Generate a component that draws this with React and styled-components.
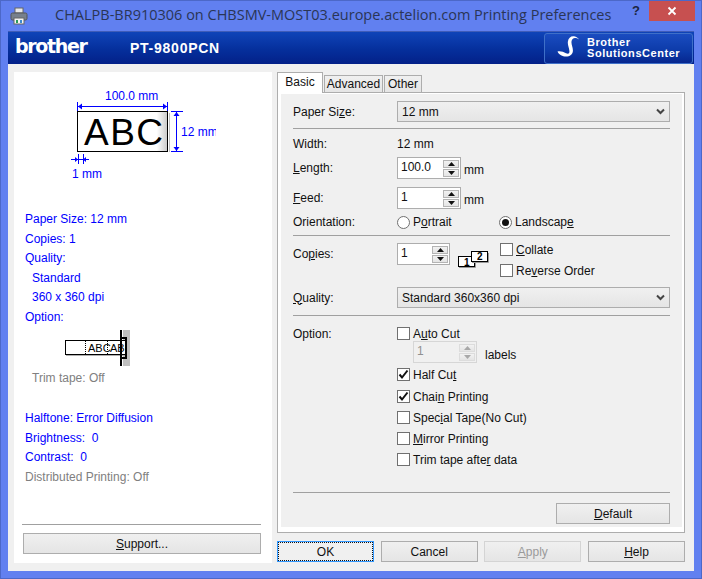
import React from "react";
import styled, { createGlobalStyle } from "styled-components";

const GlobalStyle = createGlobalStyle`
  html, body {
    margin: 0;
    padding: 0;
    background: #6180f0;
  }
  * {
    box-sizing: border-box;
  }
`;

const Win = styled.div`
  width: 702px;
  height: 579px;
  overflow: hidden;
  display: flex;
  flex-direction: column;
  background: #6180f0;
  border: 1px solid #4c68c8;
  font-family: "Liberation Sans", Arial, sans-serif;
  font-size: 12px;
  color: #111;
`;

const TitleBar = styled.div`
  height: 30px;
  flex: none;
  display: flex;
  align-items: flex-start;
  position: relative;
`;

const AppIcon = styled.svg`
  width: 18px;
  height: 18px;
  margin: 6px 0 0 9px;
  flex: none;
`;

const TitleText = styled.div`
  margin: 3px 0 0 27px;
  font-family: "Open Sans", sans-serif;
  font-size: 14.5px;
  line-height: 22px;
  color: #2a3556;
  white-space: nowrap;
`;

const HelpMark = styled.div`
  position: absolute;
  left: 631px;
  top: 2px;
  font-weight: bold;
  font-size: 13px;
  color: #1c2540;
`;

const CloseBtn = styled.div`
  position: absolute;
  left: 648px;
  top: 0;
  width: 46px;
  height: 20px;
  background: #c75050;
  color: #fff;
  display: flex;
  align-items: center;
  justify-content: center;
`;

const Client = styled.div`
  flex: 1;
  margin: 0 7px 7px 7px;
  display: flex;
  flex-direction: column;
  min-height: 0;
  border-top: 1px solid #3f5cb8;
`;

const Header = styled.div`
  height: 32px;
  flex: none;
  display: flex;
  align-items: center;
  padding: 0 1px 0 7px;
  background: linear-gradient(#0f44b8, #052f9c 55%, #032088);
  color: #fff;
`;

const Logo = styled.div`
  width: 115px;
  font-family: "DejaVu Sans", sans-serif;
  font-weight: bold;
  font-size: 19px;
  letter-spacing: -1.35px;
  line-height: 26px;
  margin-top: -4px;
`;

const ModelName = styled.div`
  font-weight: bold;
  font-size: 14px;
  letter-spacing: 0.75px;
`;

const SolutionsBtn = styled.div`
  margin-left: auto;
  width: 149px;
  height: 31px;
  display: flex;
  align-items: center;
  gap: 6px;
  padding-left: 12px;
  border: 1px solid #3f70c8;
  border-radius: 3px;
  background: linear-gradient(#1a4cc0, #0c3aa8 60%, #06268e);
  font-weight: bold;
  font-size: 11px;
  line-height: 11px;
  letter-spacing: 0.55px;
`;

const Body = styled.div`
  flex: 1;
  display: flex;
  gap: 5px;
  padding: 8px 9px 8px 6px;
  background: #f0f0f0;
  min-height: 0;
`;

const LeftPanel = styled.div`
  width: 258px;
  flex: none;
  display: flex;
  flex-direction: column;
  background: #fff;
  padding: 16px 11px 9px 8px;
`;

const Summary = styled.div`
  margin: 26px 0 0 3px;
`;

const SummaryLine = styled.div`
  height: 19.6px;
  line-height: 19.6px;
  color: ${(p) => (p.$muted ? "#808080" : "#0000ff")};
  padding-left: ${(p) => (p.$indent ? "7px" : "0")};
  white-space: nowrap;
`;

const PreviewSvg = styled.svg`
  display: block;
  margin-left: 48px;
  flex: none;
`;

const TrimSvg = styled.svg`
  display: block;
  margin: 2px 0 3px 35px;
`;

const LeftDivider = styled.div`
  margin-top: auto;
  height: 1px;
  background: #a0a0a0;
  flex: none;
`;

const SupportBtn = styled.div`
  margin-top: 8px;
  width: 238px;
  margin-left: 1px;
`;

const RightCol = styled.div`
  width: 408px;
  flex: none;
  display: flex;
  flex-direction: column;
  padding-bottom: 1px;
`;

const Tabs = styled.div`
  display: flex;
  align-items: flex-end;
  height: 21px;
  flex: none;
  position: relative;
  z-index: 1;
  margin-bottom: -1px;
`;

const Tab = styled.div`
  height: ${(p) => (p.$active ? "21px" : "18px")};
  width: ${(p) => p.$w}px;
  margin-left: ${(p) => (p.$active ? "0" : "1px")};
  border: 1px solid #adadad;
  border-bottom: ${(p) => (p.$active ? "none" : "1px solid #adadad")};
  background: ${(p) => (p.$active ? "#fff" : "linear-gradient(#f0f0f0, #e5e5e5)")};
  text-align: center;
  line-height: ${(p) => (p.$active ? "18px" : "16px")};
`;

const TabPanel = styled.div`
  flex: 1;
  border: 1px solid #adadad;
  background: #fff;
  padding: 1px 2px 5px 3px;
  display: flex;
  min-height: 0;
`;

const Form = styled.div`
  flex: 1;
  background: #f0f0f0;
  padding: 7px 12px 3px 12px;
  display: flex;
  flex-direction: column;
`;

const Row = styled.div`
  display: flex;
  align-items: ${(p) => p.$align || "center"};
  height: ${(p) => p.$h}px;
  margin-top: ${(p) => p.$mt || 0}px;
  flex: none;
`;

const Label = styled.div`
  width: 104px;
  flex: none;
  white-space: nowrap;
`;

const Divider = styled.div`
  height: 1px;
  background: #a0a0a0;
  margin-top: ${(p) => p.$mt}px;
  flex: none;
`;

const Select = styled.div`
  flex: 1;
  height: 21px;
  display: flex;
  align-items: center;
  justify-content: space-between;
  padding: 0 4px 0 4px;
  border: 1px solid #adadad;
  background: linear-gradient(#f0f0f0, #e5e5e5);
`;

const Spin = styled.div`
  width: ${(p) => p.$w}px;
  height: 22px;
  display: flex;
  justify-content: space-between;
  padding: 2px 1px 1px 3px;
  border: 1px solid ${(p) => (p.$disabled ? "#d6d6d6" : "#adadad")};
  background: ${(p) => (p.$disabled ? "#f0f0f0" : "#fff")};
  color: ${(p) => (p.$disabled ? "#909090" : "#111")};
  line-height: 14px;
  flex: none;
`;

const SpinBtns = styled.div`
  width: 16px;
  display: flex;
  flex-direction: column;
  gap: 1px;
`;

const SpinBtn = styled.div`
  flex: 1;
  display: flex;
  align-items: center;
  justify-content: center;
  border: 1px solid ${(p) => (p.$disabled ? "#dcdcdc" : "#b4b4b4")};
  background: linear-gradient(#f2f2f2, #e4e4e4);
  color: ${(p) => (p.$disabled ? "#a8a8a8" : "#111")};
`;

const Unit = styled.span`
  margin-left: 3px;
  padding-top: 3px;
`;

const Choice = styled.div`
  display: flex;
  align-items: center;
  gap: 3px;
  white-space: nowrap;
  width: ${(p) => (p.$w ? `${p.$w}px` : "auto")};
  height: 13px;
  margin-top: ${(p) => p.$mt || 0}px;
  flex: none;
`;

const Box = styled.div`
  width: 13px;
  height: 13px;
  flex: none;
  border: 1px solid #707070;
  background: #fff;
  display: flex;
  align-items: center;
  justify-content: center;
`;

const RadioDot = styled.div`
  width: 13px;
  height: 13px;
  flex: none;
  border: 1px solid #707070;
  border-radius: 50%;
  background: #fff;
  display: flex;
  align-items: center;
  justify-content: center;

  &::after {
    content: "";
    width: 7px;
    height: 7px;
    border-radius: 50%;
    background: ${(p) => (p.$on ? "#111" : "transparent")};
  }
`;

const ChoiceCol = styled.div`
  display: flex;
  flex-direction: column;
`;

const Footer = styled.div`
  margin-top: auto;
  flex: none;
`;

const FooterRow = styled.div`
  display: flex;
  justify-content: flex-end;
  margin-top: 10px;
`;

const Btn = styled.div`
  width: ${(p) => p.$w}px;
  height: 21px;
  display: flex;
  align-items: center;
  justify-content: center;
  border: 1px solid ${(p) => (p.$disabled ? "#d4d4d4" : p.$focus ? "#3399ff" : "#adadad")};
  background: ${(p) => (p.$focus ? "#f0f0f0" : "linear-gradient(#f0f0f0, #e5e5e5)")};
  color: ${(p) => (p.$disabled ? "#9a9a9a" : "#111")};
  flex: none;
`;

const FocusRing = styled.div`
  position: absolute;
`;

const OkInner = styled.div`
  width: 100%;
  height: 100%;
  display: flex;
  align-items: center;
  justify-content: center;
  border: 1px dotted #111;
`;

const Actions = styled.div`
  display: flex;
  justify-content: space-between;
  margin-top: 8px;
  flex: none;
`;

const Mn = styled.span`
  text-decoration: underline;
`;

const Up = () => (
  <svg width="7" height="4" viewBox="0 0 7 4"><path d="M3.5 0 7 4H0z" fill="currentColor" /></svg>
);
const Down = () => (
  <svg width="7" height="4" viewBox="0 0 7 4"><path d="M0 0h7L3.5 4z" fill="currentColor" /></svg>
);
const Chevron = () => (
  <svg width="9" height="7" viewBox="0 0 9 7">
    <path d="M1 1.5 4.5 5 8 1.5" fill="none" stroke="#444" strokeWidth="2" />
  </svg>
);
const Check = () => (
  <svg width="11" height="11" viewBox="0 0 11 11">
    <path d="M1.5 5.5 4 8.5 9.5 1.5" fill="none" stroke="#111" strokeWidth="2" />
  </svg>
);

function Spinner({ value, w, disabled }) {
  return (
    <Spin $w={w} $disabled={disabled}>
      <span>{value}</span>
      <SpinBtns>
        <SpinBtn $disabled={disabled}><Up /></SpinBtn>
        <SpinBtn $disabled={disabled}><Down /></SpinBtn>
      </SpinBtns>
    </Spin>
  );
}

function CheckItem({ checked, mt, children }) {
  return (
    <Choice $mt={mt}>
      <Box>{checked && <Check />}</Box>
      <span>{children}</span>
    </Choice>
  );
}

function PreviewDiagram() {
  const blue = "#0000ff";
  return (
    <PreviewSvg width="146" height="96" viewBox="0 0 146 96">
      <defs>
        <linearGradient id="shade" x1="0" x2="1">
          <stop offset="0.88" stopColor="#fff" />
          <stop offset="1" stopColor="#c8c8c8" />
        </linearGradient>
      </defs>
      <text x="35" y="12" fontSize="12" fill={blue} fontFamily="Liberation Sans">100.0 mm</text>
      <g stroke={blue} fill="none" shapeRendering="crispEdges">
        <path d="M7.5 14v10M97.5 14v10M8 18.5h89" />
        <path d="M101 23.5h12M101 63.5h12M106.5 24v39" />
        <path d="M1 71.5h18M8.5 66v10M13.5 66v10" />
      </g>
      <g fill={blue}>
        <path d="M8 18.5l4-3v6zM97 18.5l-4-3v6zM106.5 24l-3 4h6zM106.5 63l-3-4h6z" />
        <path d="M8 71.5l-3-2.5v5zM13 71.5l3-2.5v5z" />
      </g>
      <rect x="7.5" y="23.5" width="90" height="40" fill="url(#shade)" stroke="#000" />
      <rect x="99" y="25" width="1" height="39" fill="#c0c0c0" />
      <text x="14" y="57" fontSize="37" fill="#000" fontFamily="Liberation Sans" letterSpacing="1.5">ABC</text>
      <text x="111" y="48" fontSize="12" fill={blue} fontFamily="Liberation Sans">12 mm</text>
      <text x="2" y="90" fontSize="12" fill={blue} fontFamily="Liberation Sans">1 mm</text>
    </PreviewSvg>
  );
}

function TrimDiagram() {
  return (
    <TrimSvg width="72" height="36" viewBox="0 0 72 36">
      <rect x="63" y="0" width="7" height="36" fill="#c0c0c0" />
      <rect x="5.5" y="10.5" width="61" height="14" fill="#fff" stroke="#000" />
      <path d="M6 25.5h60" stroke="#b0b0b0" />
      <path d="M25.5 11v13M47.5 11v13" stroke="#000" strokeDasharray="1 1" />
      <svg x="0" y="0" width="66" height="36">
        <text x="28" y="22" fontSize="11" fontFamily="Liberation Sans" fill="#000">ABC</text>
        <text x="50" y="22" fontSize="11" fontFamily="Liberation Sans" fill="#000">ABC</text>
      </svg>
      <rect x="60" y="0" width="2" height="36" fill="#000" />
      <path d="M62 8h4v20h-4" fill="none" stroke="#000" strokeWidth="2" />
    </TrimSvg>
  );
}

function CopiesIcon() {
  return (
    <svg width="32" height="18" viewBox="0 0 32 18" style={{ marginLeft: 7, marginTop: 7, flex: "none" }}>
      <rect x="1.5" y="6.5" width="16" height="10" fill="#fff" stroke="#000" />
      <path d="M2 17.5h16.5V8" fill="none" stroke="#999" />
      <text x="7" y="15.5" fontSize="10" fontWeight="bold" fontFamily="Liberation Sans">1</text>
      <rect x="14.5" y="1.5" width="16" height="10" fill="#fff" stroke="#000" />
      <path d="M15 12.5h16.5V3" fill="none" stroke="#999" />
      <text x="20" y="10" fontSize="10" fontWeight="bold" fontFamily="Liberation Sans">2</text>
    </svg>
  );
}

export default function App() {
  return (
    <Win>
      <GlobalStyle />
      <TitleBar>
        <AppIcon viewBox="0 0 18 18">
          <rect x="5" y="1" width="8" height="5" fill="#e8e8e8" stroke="#666" />
          <rect x="1" y="6" width="16" height="7" rx="1.5" fill="#77808c" stroke="#555" />
          <rect x="4" y="11" width="10" height="6" fill="#f4f4f4" stroke="#666" />
          <rect x="6" y="13" width="2" height="3" fill="#2a9a5a" />
          <rect x="10" y="13" width="2" height="3" fill="#3a8ad0" />
        </AppIcon>
        <TitleText>CHALPB-BR910306 on CHBSMV-MOST03.europe.actelion.com Printing Preferences</TitleText>
        <HelpMark>?</HelpMark>
        <CloseBtn>
          <svg width="10" height="10" viewBox="0 0 10 10">
            <path d="M1.5 1.5l7 7M8.5 1.5l-7 7" stroke="#fff" strokeWidth="1.8" />
          </svg>
        </CloseBtn>
      </TitleBar>
      <Client>
        <Header>
          <Logo>brother</Logo>
          <ModelName>PT-9800PCN</ModelName>
          <SolutionsBtn>
            <svg width="24" height="24" viewBox="0 0 24 24" style={{ flex: "none" }}>
              <path
                d="M22 3.5C18 1 15 2 14.5 5.5c-.4 3 1.6 6 1.4 9.5-.2 3.500-3 5.500-7 5.500C5.500 20.500 2 19 .5 15.500c3-.5 6 .3 8.500 1.800 2.500 1.200 3.600 0 3.400-2.300-.3-3.500-2-6-1.500-9.500C11.400 1.500 14.500-.5 18 .5c1.800.5 3.200 1.500 4 3z"
                fill="#fff"
              />
            </svg>
            <div>
              Brother
              <br />
              SolutionsCenter
            </div>
          </SolutionsBtn>
        </Header>
        <Body>
          <LeftPanel>
            <PreviewDiagram />
            <Summary>
              <SummaryLine>Paper Size: 12 mm</SummaryLine>
              <SummaryLine>Copies: 1</SummaryLine>
              <SummaryLine>Quality:</SummaryLine>
              <SummaryLine $indent>Standard</SummaryLine>
              <SummaryLine $indent>360 x 360 dpi</SummaryLine>
              <SummaryLine>Option:</SummaryLine>
              <TrimDiagram />
              <SummaryLine $muted $indent>Trim tape: Off</SummaryLine>
              <div style={{ height: 21 }} />
              <SummaryLine>Halftone: Error Diffusion</SummaryLine>
              <SummaryLine>Brightness:&nbsp;&nbsp;0</SummaryLine>
              <SummaryLine>Contrast:&nbsp;&nbsp;0</SummaryLine>
              <SummaryLine $muted>Distributed Printing: Off</SummaryLine>
            </Summary>
            <LeftDivider />
            <SupportBtn as={Btn} $w={238} style={{ marginTop: 8, marginLeft: 1 }}>
              <span><Mn>S</Mn>upport...</span>
            </SupportBtn>
          </LeftPanel>
          <RightCol>
            <Tabs>
              <Tab $active $w={46}>Basic</Tab>
              <Tab $w={59}>Advanced</Tab>
              <Tab $w={38}>Other</Tab>
            </Tabs>
            <TabPanel>
              <Form>
                <Row $h={21}>
                  <Label>Paper Si<Mn>z</Mn>e:</Label>
                  <Select><span>12 mm</span><Chevron /></Select>
                </Row>
                <Divider $mt={6} />
                <Row $h={16} $mt={7}>
                  <Label>Width:</Label>
                  <span>12 mm</span>
                </Row>
                <Row $h={22} $mt={5}>
                  <Label><Mn>L</Mn>ength:</Label>
                  <Spinner value="100.0" w={64} />
                  <Unit>mm</Unit>
                </Row>
                <Row $h={22} $mt={8}>
                  <Label><Mn>F</Mn>eed:</Label>
                  <Spinner value="1" w={64} />
                  <Unit>mm</Unit>
                </Row>
                <Row $h={16} $mt={5}>
                  <Label>Orientation:</Label>
                  <Choice $w={102}>
                    <RadioDot />
                    <span>P<Mn>o</Mn>rtrait</span>
                  </Choice>
                  <Choice>
                    <RadioDot $on />
                    <span>Landscap<Mn>e</Mn></span>
                  </Choice>
                </Row>
                <Divider $mt={5} />
                <Row $h={35} $mt={7} $align="flex-start">
                  <Label style={{ paddingTop: 4 }}>Co<Mn>p</Mn>ies:</Label>
                  <Spinner value="1" w={53} />
                  <CopiesIcon />
                  <ChoiceCol style={{ marginLeft: 11 }}>
                    <CheckItem><Mn>C</Mn>ollate</CheckItem>
                    <CheckItem mt={8}>Re<Mn>v</Mn>erse Order</CheckItem>
                  </ChoiceCol>
                </Row>
                <Row $h={21} $mt={9}>
                  <Label><Mn>Q</Mn>uality:</Label>
                  <Select><span>Standard 360x360 dpi</span><Chevron /></Select>
                </Row>
                <Divider $mt={7} />
                <Row $h={150} $mt={11} $align="flex-start">
                  <Label>Option:</Label>
                  <ChoiceCol>
                    <CheckItem>A<Mn>u</Mn>to Cut</CheckItem>
                    <Row $h={22} $mt={1} style={{ paddingLeft: 16 }}>
                      <Spinner value="1" w={64} disabled />
                      <Unit style={{ marginLeft: 8, paddingTop: 6 }}>labels</Unit>
                    </Row>
                    <CheckItem checked mt={5}>Half Cu<Mn>t</Mn></CheckItem>
                    <CheckItem checked mt={9}>Chai<Mn>n</Mn> Printing</CheckItem>
                    <CheckItem mt={8}>Spec<Mn>i</Mn>al Tape(No Cut)</CheckItem>
                    <CheckItem mt={8}><Mn>M</Mn>irror Printing</CheckItem>
                    <CheckItem mt={8}>Trim tape afte<Mn>r</Mn> data</CheckItem>
                  </ChoiceCol>
                </Row>
                <Footer>
                  <Divider $mt={0} />
                  <FooterRow>
                    <Btn $w={114}><span><Mn>D</Mn>efault</span></Btn>
                  </FooterRow>
                </Footer>
              </Form>
            </TabPanel>
            <Actions>
              <Btn $w={97} $focus>
                <OkInner>OK</OkInner>
              </Btn>
              <Btn $w={97}>Cancel</Btn>
              <Btn $w={97} $disabled><span><Mn>A</Mn>pply</span></Btn>
              <Btn $w={97}><span><Mn>H</Mn>elp</span></Btn>
            </Actions>
          </RightCol>
        </Body>
      </Client>
    </Win>
  );
}
